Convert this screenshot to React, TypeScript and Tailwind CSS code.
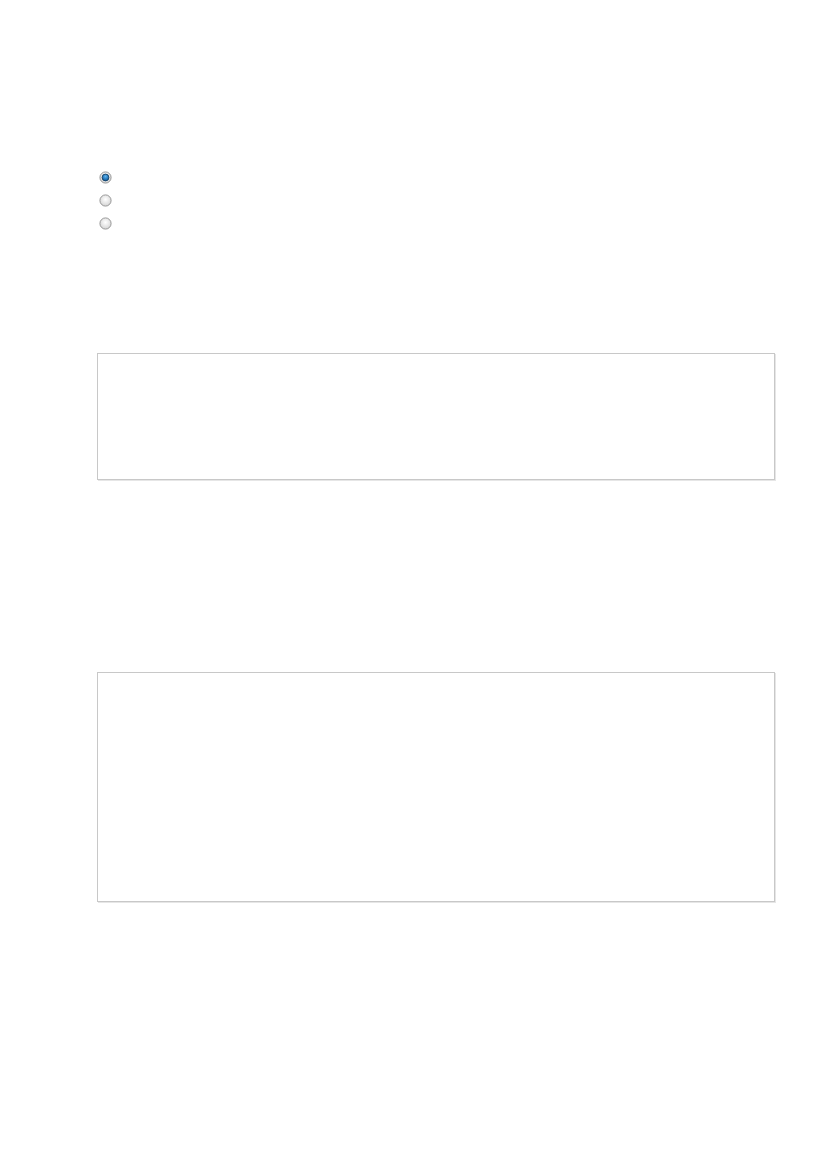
import React from "react";

function Radio({ checked }: { checked?: boolean }) {
  return (
    <svg width="13" height="13" viewBox="0 0 13 13">
      <defs>
        <radialGradient id="g1" cx="50%" cy="40%" r="60%">
          <stop offset="0%" stopColor="#ffffff" />
          <stop offset="100%" stopColor="#d4d4d4" />
        </radialGradient>
        <radialGradient id="g2" cx="50%" cy="35%" r="60%">
          <stop offset="0%" stopColor="#5db3f0" />
          <stop offset="100%" stopColor="#0b5a9e" />
        </radialGradient>
      </defs>
      <circle cx="6.5" cy="6.5" r="5.6" fill="url(#g1)" stroke="#8f8f8f" strokeWidth="0.9" />
      {checked && <circle cx="6.5" cy="6.5" r="3.4" fill="url(#g2)" stroke="#123a5c" strokeWidth="0.8" />}
    </svg>
  );
}

export default function App() {
  return (
    <div className="w-[827px] h-[1169px] bg-white pl-[97px] pr-[52px] pt-[171px] font-['Liberation_Sans',sans-serif]">
      <div className="flex flex-col gap-[10px] pl-[2px]">
        <Radio checked />
        <Radio />
        <Radio />
      </div>
      <div className="mt-[123px] h-[127px] border border-[#c8c8c8] shadow-[1px_1px_0_#e6e6e6]" />
      <div className="mt-[192px] h-[230px] border border-[#c8c8c8] shadow-[1px_1px_0_#e6e6e6]" />
    </div>
  );
}
